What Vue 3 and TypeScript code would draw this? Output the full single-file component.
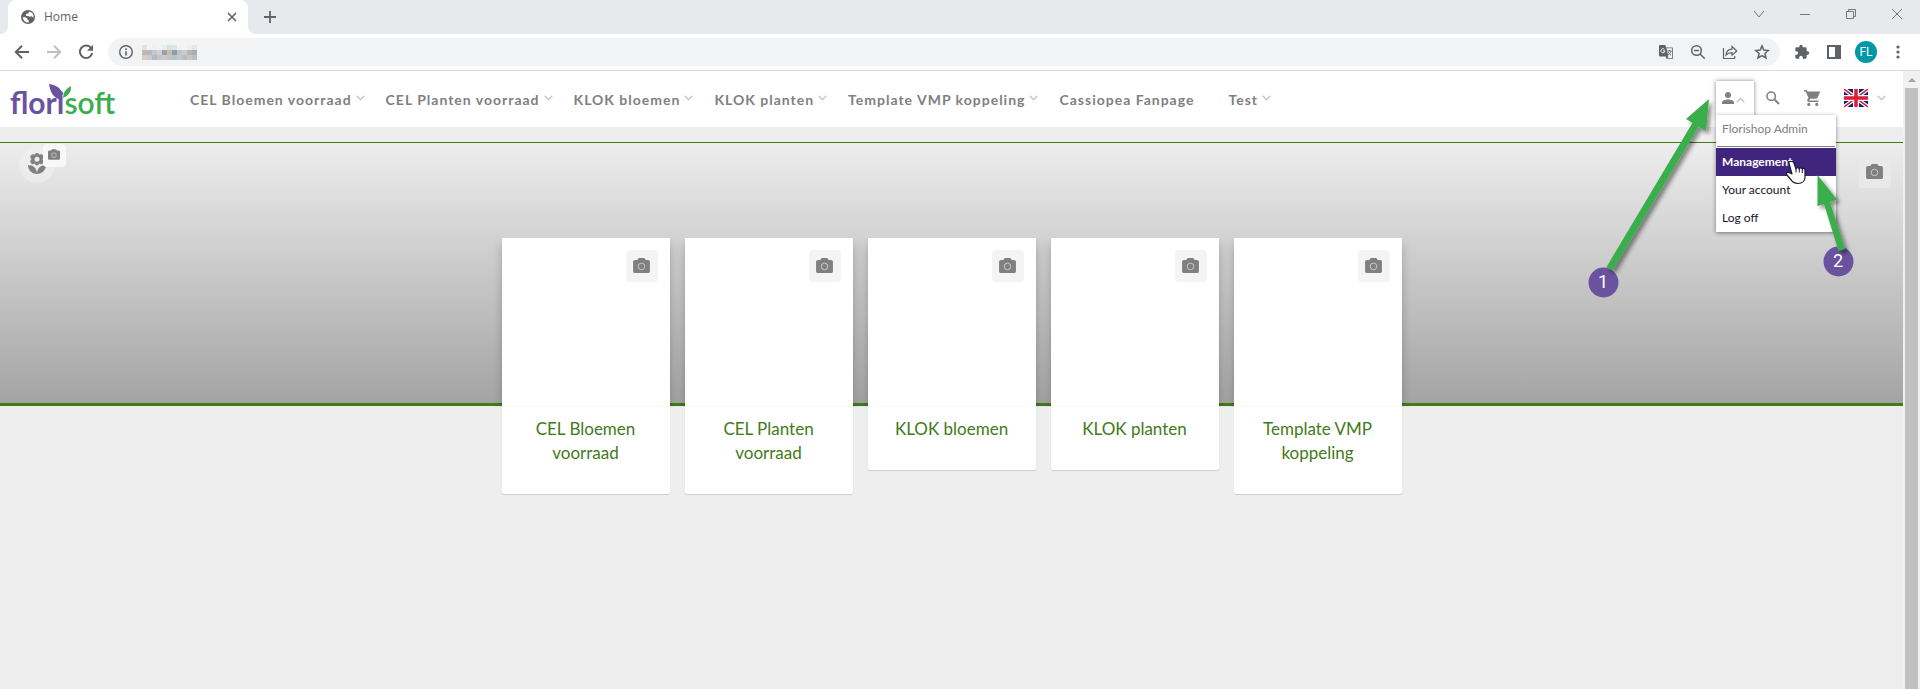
<script setup lang="ts">
import { ref } from 'vue'

interface NavItem { label: string; menu: boolean }

const navItems: NavItem[] = [
  { label: 'CEL Bloemen voorraad', menu: true },
  { label: 'CEL Planten voorraad', menu: true },
  { label: 'KLOK bloemen', menu: true },
  { label: 'KLOK planten', menu: true },
  { label: 'Template VMP koppeling', menu: true },
  { label: 'Cassiopea Fanpage', menu: false },
  { label: 'Test', menu: true },
]

const cards: string[] = [
  'CEL Bloemen voorraad',
  'CEL Planten voorraad',
  'KLOK bloemen',
  'KLOK planten',
  'Template VMP koppeling',
]

const accountLinks: string[] = ['Management', 'Your account', 'Log off']
const active = ref('Management')

/* Pixelated address: one row of colours per line of blocks */
const mosaic: string[][] = [
  ['#e3e3dd', '#f1f3f4', '#eff1f3', '#f1f3f4', '#e9edf0', '#dedfd9', '#d9e4ec', '#eff2f4', '#f1f3f4', '#eceeef', '#e2e6e8'],
  ['#c3bba8', '#b5bac2', '#c4c8ce', '#cfd0d2', '#9b9fae', '#c3bfae', '#8e9cab', '#b9c4cc', '#c6cdd2', '#b7b5b5', '#abaeb0'],
  ['#d3d0c3', '#c8cdd3', '#b5b9c0', '#c4c6cb', '#c9cbd0', '#c5c4ba', '#b9c2cc', '#c0c8cd', '#b4bdc2', '#c9c5c2', '#bdbcba'],
]
</script>

<template>
  <div class="window">
    <div class="tabstrip">
      <div class="tab">
        <svg class="i16" viewBox="0 0 16 16"><circle cx="8" cy="8" r="7" fill="#5f6368" /><path d="M2.6 8.2h3.2l1.6 1.2v1.4l1.4.8v1.9a5.6 5.6 0 0 1-6.2-5.300zM6.500 4.800l2-.4.400-1.800a5.600 5.600 0 0 1 4.700 5.800l-2.200-1.200-1.700.500-1.600-.8-1.500.200-.900-1z" fill="#fff" /></svg>
        <span class="tab-title">Home</span>
        <button class="plain" aria-label="Close tab"><svg class="i16" viewBox="0 0 16 16"><path d="M4 4l8 8M12 4l-8 8" stroke="#5f6368" stroke-width="1.600" /></svg></button>
      </div>
      <button class="plain new-tab" aria-label="New tab"><svg class="i16" viewBox="0 0 16 16"><path d="M8 2v12M2 8h12" stroke="#5f6368" stroke-width="1.800" /></svg></button>
      <div class="win-controls">
        <button class="plain" aria-label="Search tabs"><svg class="i16" viewBox="0 0 16 16"><path d="M3 5l5 6 5-6" class="thin" /></svg></button>
        <button class="plain" aria-label="Minimize"><svg class="i16" viewBox="0 0 16 16"><path d="M3 8.500h10" class="thin" /></svg></button>
        <button class="plain" aria-label="Restore"><svg class="i16" viewBox="0 0 16 16"><path d="M3.500 5.500h7v7h-7zM5.500 5.500v-2h7v7h-2" class="thin" /></svg></button>
        <button class="plain" aria-label="Close window"><svg class="i16" viewBox="0 0 16 16"><path d="M3 3l10 10M13 3L3 13" class="thin" /></svg></button>
      </div>
    </div>

    <div class="toolbar">
      <button class="plain" aria-label="Back"><svg class="i16" viewBox="0 0 16 16"><path d="M15 8H2M8 1.800L1.800 8 8 14.200" class="nav-stroke" /></svg></button>
      <button class="plain faded" aria-label="Forward"><svg class="i16" viewBox="0 0 16 16"><path d="M1 8h13M8 1.800L14.200 8 8 14.200" class="nav-stroke" /></svg></button>
      <button class="plain" aria-label="Reload"><svg class="i16" viewBox="0 0 16 16"><path d="M13.200 4.200A6.200 6.200 0 1 0 14.200 9" class="nav-stroke" /><path d="M15 .8v6H9z" fill="#5f6368" /></svg></button>
      <div class="omnibox">
        <svg class="i16" viewBox="0 0 16 16"><circle cx="8" cy="8" r="6.300" fill="none" stroke="#5f6368" stroke-width="1.400" /><path d="M8 7.200v4.300M8 4.300v1.600" stroke="#5f6368" stroke-width="1.600" /></svg>
        <svg class="mosaic" viewBox="0 0 55 15" shape-rendering="crispEdges">
          <g v-for="(row, y) in mosaic" :key="y">
            <rect v-for="(c, x) in row" :key="x" :x="x * 5" :y="y * 5" width="5" height="5" :fill="c" />
          </g>
        </svg>
        <div class="omni-actions">
          <button class="plain" aria-label="Translate"><svg class="i16" viewBox="0 0 16 16"><path d="M1.500 1h5.800l.8 2.500H14a1 1 0 0 1 1 1V14a1 1 0 0 1-1 1H8.500l-.8-2.500H2a1 1 0 0 1-1-1V2z" fill="#5f6368" /><path d="M8.500 4.300h5.700v9.900H9.300l1-1.900z" fill="#f1f3f4" /><path d="M9.300 7h4.400M11.500 6v1M13 7c-.4 1.700-1.500 3-3 4M10.300 8.200c.6 1.200 1.600 2.200 2.900 3" stroke="#5f6368" stroke-width=".9" fill="none" /><path d="M6.400 5.400a2 2 0 1 0 .5 1.500H5" stroke="#f1f3f4" fill="none" /></svg></button>
          <button class="plain" aria-label="Zoom"><svg class="i16" viewBox="0 0 16 16"><circle cx="6.500" cy="6.500" r="4.800" class="line" /><path d="M10 10l4.800 4.800M4 6.500h5" class="line" /></svg></button>
          <button class="plain" aria-label="Share"><svg class="i16" viewBox="0 0 16 16"><path d="M1.500 4v10.500h11.200V12M4 11c.3-3.800 2.400-5.700 6-5.900V2.500L14.800 7 10 11.200V8.700C7.500 8.700 5.500 9.300 4 11z" class="fine" /></svg></button>
          <button class="plain" aria-label="Bookmark"><svg class="i16" viewBox="0 0 16 16"><path d="M8 1.900l1.800 4.200 4.600.4-3.500 3 1.100 4.500-4-2.400-4 2.400 1.100-4.500-3.500-3 4.600-.4z" class="line" /></svg></button>
        </div>
      </div>
      <div class="chrome-actions">
        <button class="plain" aria-label="Extensions"><svg class="i16" viewBox="0 0 24 24"><path fill="#5f6368" d="M20.500 11H19V7a2 2 0 0 0-2-2h-4V3.500a2.500 2.500 0 0 0-5 0V5H4a2 2 0 0 0-2 2v3.800h1.500a2.700 2.700 0 0 1 0 5.400H2V20a2 2 0 0 0 2 2h3.800v-1.500a2.700 2.700 0 0 1 5.400 0V22H17a2 2 0 0 0 2-2v-4h1.500a2.500 2.500 0 0 0 0-5z" /></svg></button>
        <button class="plain" aria-label="Side panel"><svg class="i16" viewBox="0 0 16 16"><path fill="#5f6368" fill-rule="evenodd" d="M1 1h14v14H1zM3 3v10h6V3z" /></svg></button>
        <button class="avatar">FL</button>
        <button class="plain" aria-label="Browser menu"><svg class="i16" viewBox="0 0 16 16" fill="#5f6368"><circle cx="8" cy="3" r="1.600" /><circle cx="8" cy="8" r="1.600" /><circle cx="8" cy="13" r="1.600" /></svg></button>
      </div>
    </div>

    <div class="viewport">
      <div class="page">
        <header class="site-header">
          <a class="logo" href="#" aria-label="florisoft">
            <span class="flori">flori</span><span class="soft">soft</span>
            <svg class="leaves" viewBox="0 0 24 17"><path fill="#6b529f" d="M0 0C7 1 12 4 13 9q1 4 0 7Q7 15 4 11 1 7 0 0z" /><path fill="#3bae4c" d="M22 2q1 8-8 12 0-8 8-12z" /></svg>
          </a>
          <nav class="main-nav">
            <a v-for="item in navItems" :key="item.label" href="#">{{ item.label }}<svg v-if="item.menu" class="chev" viewBox="0 0 9 6"><path d="M.7.700l3.800 4L8.300.700" /></svg></a>
          </nav>
          <div class="tools">
            <div class="account">
              <button class="account-btn" aria-label="Account">
                <svg class="person" viewBox="0 0 12 12" fill="#808080"><circle cx="6" cy="3" r="3" /><path d="M0 12v-1.500C0 8.500 3 7.500 6 7.500s6 1 6 3V12z" /></svg>
                <svg class="chev up" viewBox="0 0 9 6"><path d="M.7.700l3.800 4L8.300.700" /></svg>
              </button>
              <div class="menu">
                <div class="menu-head">Florishop Admin</div>
                <a v-for="l in accountLinks" :key="l" href="#" :class="{ on: l === active }" @mouseenter="active = l">{{ l }}</a>
              </div>
            </div>
            <button class="plain tool" aria-label="Search"><svg class="i16" viewBox="0 0 16 16"><circle cx="6.200" cy="6.200" r="4.200" fill="none" stroke="#808080" stroke-width="1.600" /><path d="M9.500 9.500l4.500 4.500" stroke="#808080" stroke-width="2" /></svg></button>
            <button class="plain tool" aria-label="Cart"><svg class="i16" viewBox="1 2 20 20"><path fill="#808080" d="M7 18a2 2 0 1 0 0 4 2 2 0 0 0 0-4zM1 2v2h2l3.600 7.600-1.400 2.400C4.500 15.400 5.500 17 7 17h12v-2H7.400l1.100-2h7.500c.7 0 1.400-.4 1.700-1L21.300 4H5.200L4.300 2zM17 18a2 2 0 1 0 0 4 2 2 0 0 0 0-4z" /></svg></button>
            <button class="plain lang" aria-label="Language">
              <svg class="flag" viewBox="0 0 24 18"><path fill="#181a7c" d="M0 0h24v18H0z" /><path d="M0 0l24 18M24 0L0 18" stroke="#fff" stroke-width="4" /><path d="M0 0l24 18M24 0L0 18" stroke="#d81e3a" stroke-width="1.500" /><path d="M12 0v18M0 9h24" stroke="#fff" stroke-width="6" /><path d="M12 0v18M0 9h24" stroke="#d81e3a" stroke-width="3.500" /></svg>
              <svg class="chev" viewBox="0 0 9 6"><path d="M.7.700l3.800 4L8.300.700" /></svg>
            </button>
          </div>
        </header>

        <section class="banner">
          <button class="flower" aria-label="Choose icon">
            <svg viewBox="0 0 18 21" fill="#808080"><path d="M18 12c-5 0-9 3-9 9 5 0 9-4 9-9zM0 12c0 5 4 9 9 9 0-6-4-9-9-9z" /><path fill-rule="evenodd" d="M9 0a2.500 2.500 0 0 1 2.400 1.800 2.500 2.500 0 0 1 3 4.400 2.500 2.500 0 0 1-3 4.400 2.500 2.500 0 0 1-4.800 0 2.500 2.500 0 0 1-3-4.400 2.500 2.500 0 0 1 3-4.400A2.500 2.500 0 0 1 9 0zM9 3.700a2.500 2.500 0 1 0 0 5 2.500 2.500 0 0 0 0-5z" /></svg>
          </button>
          <button class="badge" aria-label="Change icon picture"><svg viewBox="0 0 18 16"><path fill="#808080" d="M6 0h6l1.500 2H16a2 2 0 0 1 2 2v10a2 2 0 0 1-2 2H2a2 2 0 0 1-2-2V4a2 2 0 0 1 2-2h2.500z" /><circle cx="9" cy="9" r="3.500" fill="none" stroke="#ddd" /></svg></button>
          <button class="cam banner-cam" aria-label="Change banner picture"><svg viewBox="0 0 18 16"><path fill="#808080" d="M6 0h6l1.500 2H16a2 2 0 0 1 2 2v10a2 2 0 0 1-2 2H2a2 2 0 0 1-2-2V4a2 2 0 0 1 2-2h2.500z" /><circle cx="9" cy="9" r="3.500" fill="none" stroke="#ccc" /></svg></button>
        </section>

        <main class="cards">
          <article v-for="c in cards" :key="c" class="card">
            <div class="pic">
              <button class="cam" :aria-label="'Change picture: ' + c"><svg viewBox="0 0 18 16"><path fill="#808080" d="M6 0h6l1.500 2H16a2 2 0 0 1 2 2v10a2 2 0 0 1-2 2H2a2 2 0 0 1-2-2V4a2 2 0 0 1 2-2h2.500z" /><circle cx="9" cy="9" r="3.500" fill="none" stroke="#ccc" /></svg></button>
            </div>
            <a href="#">{{ c }}</a>
          </article>
        </main>
      </div>
      <div class="scrollbar"><span class="arrow-up"></span><span class="thumb"></span></div>
    </div>

    <svg class="notes" viewBox="0 0 340 310">
      <defs><filter id="sh" x="-20%" y="-20%" width="150%" height="150%"><feDropShadow dx="3" dy="3" stdDeviation="2" flood-opacity=".45" /></filter></defs>
      <circle cx="23.500" cy="282.500" r="15" fill="#6b529f" />
      <circle cx="258.500" cy="261.500" r="15" fill="#6b529f" />
      <g fill="#3bae4c" filter="url(#sh)">
        <path d="M129 99l-23 20 6.500 3.700L26.500 267l6 3.500L118.500 127l7.500 4z" />
        <path d="M237.500 175v31l6.500-2 14.500 47 6.500-2L250 202l7-2.500z" />
      </g>
      <text x="23" y="288">1</text>
      <text x="258" y="267">2</text>
      <path fill="#fff" stroke="#1a1a2e" stroke-width="1.200" stroke-linejoin="round" d="M211.500 161.500c-2-.5-3 .5-2.500 2l3 10.500-3-1.500c-2-.8-3.500 1-2 2.500l4.500 5.500c1.500 2 3.500 3 6.500 3 4.500 0 7-3 7-6.500V170c0-2-2.500-2-2.700-.5-.2-1.800-2.600-2-3-.5-.5-1.800-3-1.600-3.300 0l-2-6q-.8-1.500-2.500-1.500z" />
      <path fill="none" stroke="#1a1a2e" d="M216 168v4.500M219.300 169v3.500M222.300 170v3" />
    </svg>
  </div>
</template>

<style>
body { margin: 0; }
</style>

<style scoped>
.window {
  position: relative;
  display: flex;
  flex-direction: column;
  min-height: 100vh;
  overflow: hidden;
  background: #fff;
  font-family: Lato, "Liberation Sans", sans-serif;
}
svg { display: block; flex: none; }
a { text-decoration: none; color: inherit; }
button { font: inherit; border: 0; padding: 0; margin: 0; cursor: pointer; }
.plain { display: flex; align-items: center; background: none; }
.i16 { width: 16px; height: 16px; }
.thin { fill: none; stroke: #777; stroke-width: 1; }
.nav-stroke { fill: none; stroke: #5f6368; stroke-width: 2; }
.line { fill: none; stroke: #5f6368; stroke-width: 1.5; }
.fine { fill: none; stroke: #5f6368; stroke-width: 1.2; }
.faded { opacity: .4; }

.tabstrip { display: flex; align-items: stretch; height: 34px; background: #e8e9ed; padding-left: 8px; }
.tab {
  position: relative;
  display: flex;
  align-items: center;
  width: 240px;
  box-sizing: border-box;
  padding: 0 8px 0 12px;
  gap: 8px;
  border-radius: 8px 8px 0 0;
  background: #fff;
}
.tab::before, .tab::after { content: ""; position: absolute; bottom: 0; width: 8px; height: 8px; }
.tab::before { left: -8px; background: radial-gradient(circle at 0 0, #e8e9ed 8px, #fff 8px); }
.tab::after { right: -8px; background: radial-gradient(circle at 100% 0, #e8e9ed 8px, #fff 8px); }
.tab-title { flex: 1; font: 12px/16px "Open Sans", sans-serif; color: #5f6368; }
.new-tab { margin-left: 14px; }
.win-controls { display: flex; gap: 30px; margin-left: auto; padding: 0 15px 6px 0; }

.toolbar { display: flex; align-items: center; gap: 16px; height: 36px; padding: 0 14px; border-bottom: 1px solid #d9dadc; }
.omnibox { flex: 1; display: flex; align-items: center; height: 28px; margin: 0 8px 0 -2px; padding: 0 10px; border-radius: 14px; background: #f1f3f4; }
.mosaic { width: 55px; height: 15px; margin-left: 8px; }
.omni-actions { display: flex; gap: 16px; margin-left: auto; }
.chrome-actions { display: flex; align-items: center; gap: 16px; margin-left: -10px; }
.avatar { width: 22px; height: 22px; margin: 0 -3px; border-radius: 50%; background: #0097a7; color: #fff; font: 12px/22px Roboto, sans-serif; }

.viewport { flex: 1; display: flex; }
.page { flex: 1; min-width: 0; background: #eee; }
.scrollbar { width: 13px; padding: 0 2px; background: #f1f1f1; display: flex; flex-direction: column; }
.arrow-up { height: 17px; }
.arrow-up::before { content: ""; display: block; width: 0; margin: 7px auto 0; border: 4px solid transparent; border-top: 0; border-bottom-color: #a3a3a3; }
.thumb { flex: 1; background: #c1c1c1; }

.site-header { display: flex; align-items: center; height: 56px; background: #fff; padding-left: 10px; }
.logo { position: relative; width: 180px; height: 40px; font-size: 30px; line-height: 46px; font-weight: 700; white-space: nowrap; }
.flori { color: #6b529f; }
.soft { color: #3bae4c; font-weight: 600; }
.leaves { position: absolute; left: 39px; top: 5px; width: 24px; height: 17px; }
.main-nav { display: flex; gap: 34px; padding-top: 2px; }
.main-nav a { position: relative; font-size: 14px; line-height: 20px; font-weight: 700; letter-spacing: 1px; color: #808080; white-space: nowrap; }
.chev { width: 9px; height: 6px; }
.chev path { fill: none; stroke: #c8c8c8; stroke-width: 1.4; }
.main-nav .chev { position: absolute; left: 100%; top: 5px; margin-left: 4px; }
.up { transform: rotate(180deg); }

.tools { display: flex; align-items: center; margin-left: auto; padding-right: 17px; }
.tools .plain { padding-bottom: 2px; }
.account { position: relative; z-index: 2; }
.account-btn { display: flex; align-items: center; gap: 2px; box-sizing: border-box; width: 38px; height: 36px; padding: 0 6px 2px; background: #fff; box-shadow: 0 0 4px rgba(0, 0, 0, .5); }
.person { width: 12px; height: 12px; }
.account-btn .up { margin-top: 4px; }
.menu { position: absolute; left: 0; top: 34px; width: 120px; background: #fff; box-shadow: 0 1px 4px rgba(0, 0, 0, .45); font-size: 12px; line-height: 28px; }
.menu-head { margin: 0 1px 1px; padding: 0 5px 3px; border-bottom: 1px solid #808080; color: #808080; }
.menu a { display: block; padding-left: 6px; color: #1c1230; }
.menu a.on { background: #40257f; color: #fff; font-weight: 700; }
.tool { margin-left: 11px; }
.tool + .tool { margin-left: 23px; }
.lang { gap: 9px; margin-left: 24px; }
.flag { width: 24px; height: 18px; }

.banner { position: relative; box-sizing: border-box; height: 264px; margin-top: 15px; border-top: 1px solid #3f7d16; border-bottom: 3px solid #437a1a; background: linear-gradient(#ededed, #a4a4a4); }
.flower { display: flex; align-items: center; justify-content: center; position: absolute; box-sizing: border-box; left: 19px; top: 4px; width: 36px; height: 36px; padding-bottom: 4px; border-radius: 50%; background: rgba(240, 240, 240, .6); }
.flower svg { width: 18px; height: 21px; }
.badge { position: absolute; box-sizing: border-box; left: 43px; top: 1px; display: flex; align-items: center; justify-content: center; width: 23px; height: 23px; padding: 0 1px 2px 0; border-radius: 4px; background: #f8f8f8; }
.badge svg { width: 12px; height: 11px; }
.cam { display: flex; align-items: center; justify-content: center; box-sizing: border-box; width: 32px; height: 32px; padding: 0 1px 2px 0; border-radius: 4px; background: #f4f4f4; }
.cam svg { width: 17px; height: 15px; }
.banner-cam { position: absolute; right: 12px; top: 13px; background: #e9e9e9; }

.cards { position: relative; display: flex; align-items: flex-start; justify-content: center; gap: 15px; margin-top: -168px; }
.card { width: 168px; background: #fff; border-radius: 0 0 2px 2px; box-shadow: 0 1px 1px rgba(0, 0, 0, .14); text-align: center; }
.pic { display: flex; justify-content: flex-end; box-sizing: border-box; height: 169px; padding: 12px; border-bottom: 1px solid #fafafa; background: #fff; box-shadow: 0 6px 10px rgba(0, 0, 0, .2); clip-path: inset(0 -16px 0 -16px); }
.card a { display: block; padding: 10px 24px 29px; font-size: 17px; line-height: 24px; color: #437a1a; }

.notes { position: absolute; right: 0; top: 0; z-index: 5; width: 340px; height: 310px; pointer-events: none; }
.notes text { font: 18px Roboto, sans-serif; fill: #fff; text-anchor: middle; }
</style>
